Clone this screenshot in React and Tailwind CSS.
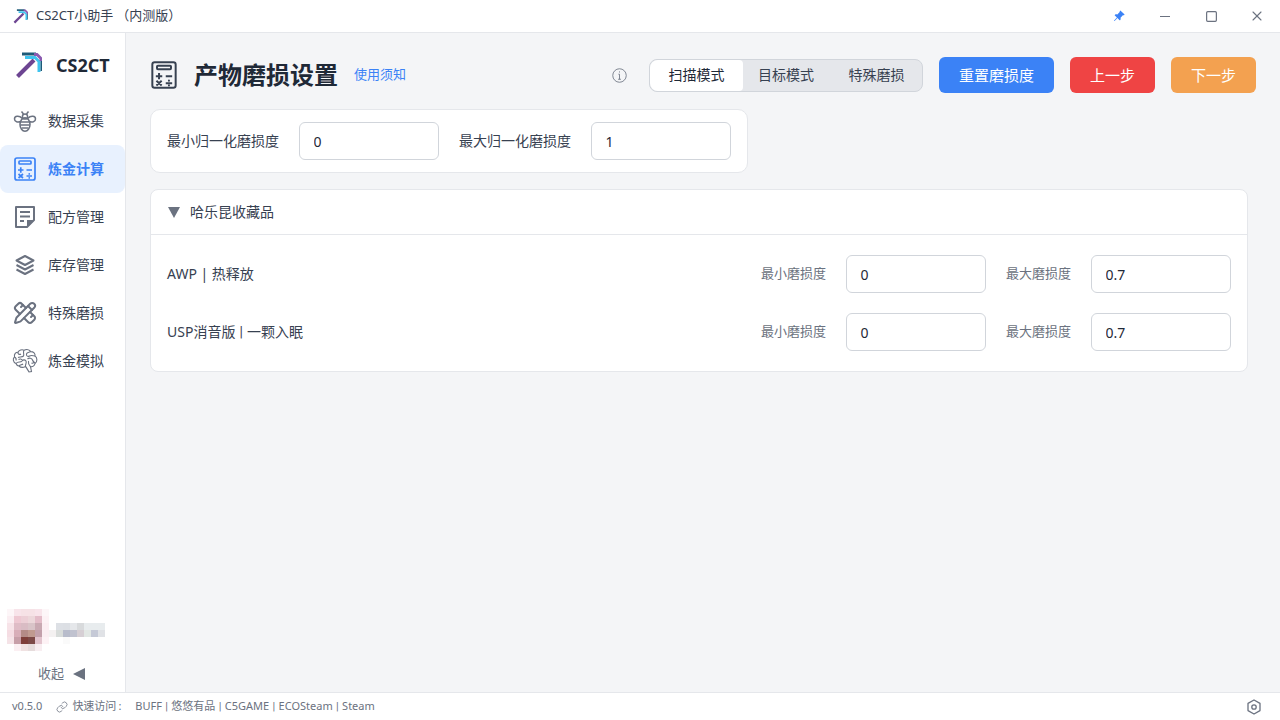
import React from "react";
import { BsPinAngleFill } from "react-icons/bs";
import { Link, PencilRuler, Square, X } from "lucide-react";

const font = { fontFamily: '"Noto Sans", "Noto Sans CJK SC", sans-serif' };

const avatarCells = [
  ["#fdf6f8", "#f8e4ea", "#f6e2e6", "#f6e2e6", "#f8e4ea", "#fdf6f8"],
  ["#fbeef2", "#eec8d2", "#eccfd6", "#ecd7da", "#e3bcc8", "#fdf2f5"],
  ["#f7e3e8", "#dfbcc6", "#d9bcc4", "#d9c4c8", "#c9a9b2", "#fceef2"],
  ["#f5dde3", "#d8aeb8", "#b48b87", "#c09a90", "#c3a0ab", "#fbeef2"],
  ["#f5e3e7", "#c79fa8", "#7f3f3a", "#7d4a48", "#e2c3cd", "#fdf2f5"],
  ["#ffffff", "#fbeff2", "#f0e2e2", "#e6dcdc", "#f8eef1", "#ffffff"],
];

const nameCells = [
  ["#ffffff", "#dde0e5", "#dcdfe4", "#e5e7ea", "#d8dadc", "#e8ecee", "#e8ecee", "#e8ecee"],
  ["#f4f1f1", "#d8dcda", "#b8bccb", "#c0c2cf", "#d6cfd4", "#e2e7e4", "#c5c9d6", "#e0e2e6"],
  ["#ffffff", "#ffffff", "#fafafa", "#ffffff", "#ffffff", "#ffffff", "#ffffff", "#ffffff"],
];

function Mosaic({ cells, className }) {
  return (
    <svg
      className={className}
      viewBox={`0 0 ${cells[0].length} ${cells.length}`}
      shapeRendering="crispEdges"
    >
      {cells.map((row, y) =>
        row.map((c, x) => <rect key={`${x}-${y}`} x={x} y={y} width="1" height="1" fill={c} />)
      )}
    </svg>
  );
}

function Pickaxe({ className }) {
  return (
    <svg className={className} viewBox="0 0 27 27" fill="none">
      <path d="M2.5 24.5 L19 8" stroke="#6d4592" strokeWidth="4" />
      <path d="M7 2 H21" stroke="#1e5a78" strokeWidth="3" />
      <path d="M10 5.5 H20 L24 9.5 V20" stroke="#3fc4ef" strokeWidth="3" />
      <path d="M19 2.5 H22 L26 6.5 V9" stroke="#8a5ab0" strokeWidth="3" />
      <path d="M26.3 9 V19" stroke="#1e5a78" strokeWidth="1.5" />
    </svg>
  );
}

function CalcIcon({ className }) {
  return (
    <svg className={className} viewBox="0 0 24 24" fill="none" stroke="currentColor" strokeWidth="1.7">
      <rect x="2" y="1" width="20" height="22" rx="2" />
      <rect x="6" y="4" width="12" height="3" rx="0.8" />
      <path d="M5 13 H10.5 M7.75 10.3 V15.7 M13.5 13 H19 M5.5 17 L10 21 M10 17 L5.5 21 M13.5 19 H19" />
      <path d="M16.25 16.8 V17 M16.25 20.8 V21" strokeLinecap="round" />
    </svg>
  );
}

function BeeIcon({ className }) {
  return (
    <svg className={className} viewBox="0 0 24 24" fill="none" stroke="currentColor" strokeWidth="1.5">
      <circle cx="12" cy="7.5" r="2.6" />
      <path d="M10.5 5 L8.5 2.5 M13.5 5 L15.5 2.5" />
      <ellipse cx="12" cy="15.5" rx="5" ry="6.8" />
      <path d="M7.5 13 H16.5 M7.2 16 H16.8 M8.5 19 H15.5" />
      <path d="M9.3 9.5 C6 6 1.5 7 1.5 10 C1.5 13 5 13.5 7.6 12.5" />
      <path d="M14.7 9.5 C18 6 22.5 7 22.5 10 C22.5 13 19 13.5 16.4 12.5" />
    </svg>
  );
}

function NoteIcon({ className }) {
  return (
    <svg className={className} viewBox="0 0 24 24" fill="none" stroke="currentColor" strokeWidth="2">
      <path d="M3 22 V2 H21 V15 L14 22 Z" strokeLinejoin="round" />
      <path d="M7 7 H17 M7 11.5 H17 M7 16 H11" />
      <path d="M21 15 H14 V22 Z" fill="currentColor" stroke="none" />
    </svg>
  );
}

function LayersIcon({ className }) {
  return (
    <svg className={className} viewBox="0 0 24 24" fill="none" stroke="currentColor" strokeWidth="2" strokeLinejoin="round">
      <path d="M12 3 L20.5 7.5 L12 12 L3.5 7.5 Z" />
      <path d="M3.5 12 L12 16.5 L20.5 12" />
      <path d="M3.5 16.5 L12 21 L20.5 16.5" />
    </svg>
  );
}

function BrainIcon({ className }) {
  return (
    <svg className={className} viewBox="0 0 26 26" fill="none" stroke="currentColor" strokeWidth="1.1">
      <path d="M4 15.5 C1 14.5 0.5 10.5 2.5 9 C1.8 6 4 4 6 4.2 C7 2 10 1.2 12 2.2 C14.5 1 17.5 1.6 18.8 3.6 C21.5 3.6 23.5 5.6 23 8 C25.5 9.5 25.5 14 23 15.5 C22.6 18 20.5 19 18.5 18.6 L19.5 23.5 L17 24 C15.5 21.5 14.5 19.5 13.5 18.5 C11 19.8 8.5 19.5 7 18 C5.5 18 4.5 17 4 15.5 Z" />
      <path d="M12 2.2 C10.5 4.5 12.5 6 11.5 8 C10 9.5 7.5 8.5 6 9.5 M6 4.2 C5.5 6 7.5 7 9 6 M2.5 9 C4 9.8 4.5 11 4 12.5 M4 15.5 C6 13 8.5 15 10 13 C11 11.5 13 11.5 14 13 C15 15 13 16.5 13.5 18.5 M7 18 C8 16.5 10 17 11 16 M18.8 3.6 C17 4.5 15 4 14.5 6 C14 8 16 9 17.5 8 C19 7 21 7.5 23 8 M15.5 11 C17 9.5 20 10 20.5 12 C21 14 23 14 23 15.5 M16.5 13 C16 15 17 17 18.5 18.6 M6.5 11.5 C8 10.5 9.5 11 10 12 M19.5 15 C20.5 15.5 21.5 15 22 14" />
    </svg>
  );
}

function InfoIcon({ className }) {
  return (
    <svg className={className} viewBox="0 0 16 16" fill="none" stroke="currentColor" strokeWidth="0.9">
      <circle cx="8" cy="8" r="7.2" />
      <path d="M6.8 6.6 H8 V12 M6.5 12 H9.5" />
      <path d="M8 3.6 V4.8" />
    </svg>
  );
}

function HexIcon({ className }) {
  return (
    <svg className={className} viewBox="0 0 16 16" fill="none" stroke="currentColor" strokeWidth="1.3">
      <path d="M8 1 L14 4.4 V11.6 L8 15 L2 11.6 V4.4 Z" strokeLinejoin="round" />
      <circle cx="8" cy="8" r="2.2" />
    </svg>
  );
}

// the reference's pipe is much narrower than the one in Noto Sans
function Pipe() {
  return <span className="px-[0.5px] font-['Roboto']">|</span>;
}

const navItems = [
  { label: "数据采集", icon: <BeeIcon className="h-6 w-6" /> },
  { label: "炼金计算", icon: <CalcIcon className="h-6 w-6" />, active: true },
  { label: "配方管理", icon: <NoteIcon className="h-6 w-6" /> },
  { label: "库存管理", icon: <LayersIcon className="h-6 w-6" /> },
  { label: "特殊磨损", icon: <PencilRuler className="h-6 w-6" strokeWidth={2} /> },
  { label: "炼金模拟", icon: <BrainIcon className="-mx-px h-[26px] w-[26px]" /> },
];

function Field({ value }) {
  return (
    <input
      readOnly
      value={value}
      className="h-[38px] w-[140px] rounded-md border border-[#d1d5db] bg-white px-[13.5px] text-sm text-[#1f2937] outline-none"
    />
  );
}

function WearRow({ name }) {
  return (
    <div className="flex items-center">
      <span className="flex-1 text-sm text-[#374151]">{name}</span>
      <span className="mr-5 text-[13px] text-[#6b7280]">最小磨损度</span>
      <Field value="0" />
      <span className="ml-5 mr-5 text-[13px] text-[#6b7280]">最大磨损度</span>
      <Field value="0.7" />
    </div>
  );
}

export default function App() {
  return (
    <div style={font} className="flex h-[720px] w-[1280px] flex-col overflow-hidden bg-[#f4f5f7]">
      {/* title bar */}
      <div className="flex h-[33px] shrink-0 items-center border-b border-[#e5e7eb] bg-white">
        <Pickaxe className="ml-[13px] h-[15px] w-[15px]" />
        <span className="ml-2 text-[13px] text-[#374151]">
          CS2CT小助手<span className="ml-[3px]">（内测版）</span>
        </span>
        <div className="ml-auto flex h-full items-center">
          <div className="flex h-full w-[46px] items-center justify-center text-[#3b82f6]">
            <BsPinAngleFill className="h-3 w-3" />
          </div>
          <div className="flex h-full w-[46px] items-center justify-center text-[#6b7280]">
            <span className="h-px w-[10px] bg-[#6b7280]" />
          </div>
          <div className="flex h-full w-[46px] items-center justify-center text-[#6b7280]">
            <Square className="h-[13px] w-[13px]" strokeWidth={2.2} />
          </div>
          <div className="flex h-full w-[46px] items-center justify-center text-[#6b7280]">
            <X className="h-4 w-4" strokeWidth={1.6} />
          </div>
        </div>
      </div>

      <div className="flex min-h-0 flex-1">
        {/* sidebar */}
        <aside className="flex w-[126px] shrink-0 flex-col border-r border-[#e5e7eb] bg-white">
          <div className="flex h-[64px] shrink-0 items-center pl-[15px]">
            <Pickaxe className="h-[27px] w-[27px]" />
            <span className="ml-[14px] text-lg font-bold text-[#1f2937]">CS2CT</span>
          </div>
          <nav className="flex flex-col">
            {navItems.map((item) => (
              <div
                key={item.label}
                className={
                  item.active
                    ? "flex h-12 items-center gap-[11px] rounded-lg bg-[#e8f1fe] pl-[13px] text-sm font-semibold text-[#3b82f6]"
                    : "flex h-12 items-center gap-[11px] pl-[13px] text-sm text-[#374151]"
                }
              >
                <span className={item.active ? "text-[#3b82f6]" : "text-[#6b7280]"}>{item.icon}</span>
                {item.label}
              </div>
            ))}
          </nav>
          <div className="mt-auto flex items-start pl-[7px]">
            <Mosaic cells={avatarCells} className="h-[42px] w-[42px]" />
            <Mosaic cells={nameCells} className="mt-[14px] h-[21px] w-[56px]" />
          </div>
          <div className="flex h-[41px] items-center gap-[9px] pl-[38px] pt-1 text-[13px] text-[#6b7280]">
            收起
            <span className="h-0 w-0 border-y-[6px] border-r-[12px] border-y-transparent border-r-[#6b7280]" />
          </div>
        </aside>

        {/* main */}
        <main className="min-w-0 flex-1 pl-6 pr-6 pt-6">
          <div className="flex h-9 items-center">
            <CalcIcon className="h-7 w-7 text-[#374151]" />
            <h1 className="ml-4 text-2xl font-bold text-[#1f2937]">产物磨损设置</h1>
            <span className="ml-4 text-[13px] text-[#3b82f6]">使用须知</span>
            <InfoIcon className="ml-auto h-[15px] w-[15px] text-[#6b7280]" />
            <div className="ml-[22px] flex h-[33px] w-[274px] items-stretch rounded-lg border border-[#d1d5db] bg-[#e5e7eb] text-sm text-[#374151]">
              <div className="flex w-[93px] items-center justify-center rounded-l-lg rounded-r-sm bg-white text-[#1f2937]">
                扫描模式
              </div>
              <div className="flex w-[86px] items-center justify-center">目标模式</div>
              <div className="flex flex-1 items-center justify-center pl-[2px]">特殊磨损</div>
            </div>
            <button className="ml-4 h-9 w-[115px] rounded-md bg-[#3b82f6] text-[15px] text-white">重置磨损度</button>
            <button className="ml-4 h-9 w-[85px] rounded-md bg-[#ef4444] text-[15px] text-white">上一步</button>
            <button className="ml-4 h-9 w-[85px] rounded-md bg-[#f3a150] text-[15px] text-white">下一步</button>
          </div>

          <div className="mt-4 flex w-[598px] items-center gap-5 rounded-[10px] border border-[#e5e7eb] bg-white px-4 py-3 text-sm text-[#374151]">
            <span>最小归一化磨损度</span>
            <Field value="0" />
            <span>最大归一化磨损度</span>
            <Field value="1" />
          </div>

          <div className="mr-2 mt-4 rounded-lg border border-[#e5e7eb] bg-white">
            <div className="flex h-[45px] items-center border-b border-[#e5e7eb] pl-4 text-sm text-[#374151]">
              <span className="ml-[1px] h-0 w-0 border-x-[6px] border-t-[11px] border-x-transparent border-t-[#6b7280]" />
              <span className="ml-[10px]">哈乐昆收藏品</span>
            </div>
            <div className="flex flex-col gap-5 py-5 pl-4 pr-4">
              <WearRow name="AWP | 热释放" />
              <WearRow name={<>USP消音版 <Pipe /> 一颗入眠</>} />
            </div>
          </div>
        </main>
      </div>

      {/* status bar */}
      <footer className="flex h-[28px] shrink-0 items-center border-t border-[#e5e7eb] bg-white pl-3 pr-[18px] text-[11px] text-[#6b7280]">
        <span>v0.5.0</span>
        <Link className="ml-[14px] h-3 w-3" strokeWidth={1.5} />
        <span className="ml-1">快速访问</span>
        <span className="ml-[2px]">:</span>
        <span className="ml-[14px]">
          BUFF <Pipe /> 悠悠有品 <Pipe /> C5GAME <Pipe /> ECOSteam <Pipe /> Steam
        </span>
        <HexIcon className="ml-auto h-4 w-4" />
      </footer>
    </div>
  );
}
